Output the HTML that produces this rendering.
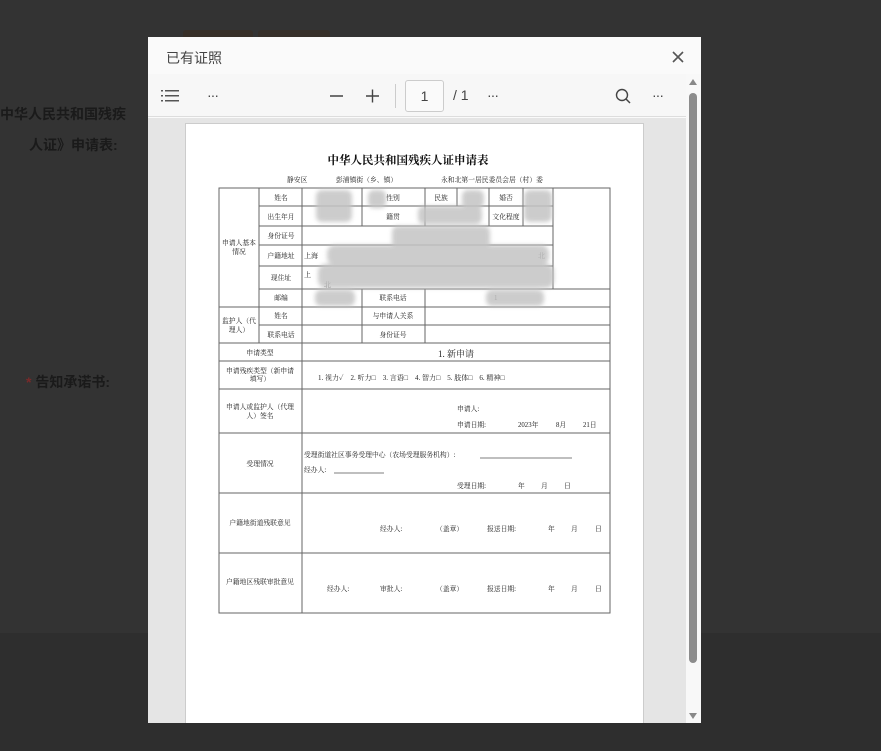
<!DOCTYPE html>
<html><head><meta charset="utf-8"><style>
*{margin:0;padding:0;box-sizing:border-box}
body{width:881px;height:751px;overflow:hidden;background:#333;position:relative;font-family:"Liberation Sans","Noto Sans CJK SC",sans-serif}
.abs{position:absolute}
</style></head><body>
<div class="abs" style="left:0;top:633px;width:881px;height:118px;background:#2e2e2e"></div>
<div class="abs" style="left:183px;top:30px;width:70px;height:8px;background:#372f28;border-radius:3px 3px 0 0"></div>
<div class="abs" style="left:258px;top:30px;width:72px;height:8px;background:#362f29;border-radius:3px 3px 0 0"></div>
<div class="abs" style="left:0;top:104px;font-size:14px;font-weight:bold;color:#1a1a1a">中华人民共和国残疾</div>
<div class="abs" style="left:29px;top:135px;font-size:14px;font-weight:bold;color:#1a1a1a">人证》申请表:</div>
<div class="abs" style="left:26px;top:372px;font-size:14px;font-weight:bold;color:#1a1a1a"><span style="color:#7a2a2a">*</span> 告知承诺书:</div>

<div class="abs" style="left:148px;top:37px;width:553px;height:686px;background:#fafafa"></div>
<div class="abs" style="left:166px;top:48px;font-size:14px;color:#444">已有证照</div>
<svg class="abs" style="left:671px;top:50px" width="14" height="14"><path d="M2 2L12 12M12 2L2 12" stroke="#555" stroke-width="1.6"/></svg>
<div class="abs" style="left:148px;top:74px;width:538px;height:43px;background:#f7f7f7;border-bottom:1px solid #ddd"></div>
<svg class="abs" style="left:160px;top:88px" width="22" height="16"><g fill="#555"><rect x="1" y="2" width="2" height="1.5"/><rect x="5" y="2" width="14" height="1.5"/><rect x="1" y="7" width="2" height="1.5"/><rect x="5" y="7" width="14" height="1.5"/><rect x="1" y="12" width="2" height="1.5"/><rect x="5" y="12" width="14" height="1.5"/></g></svg>
<div class="abs" style="left:207px;top:87px;font-size:14px;color:#444;letter-spacing:-1px">···</div>
<svg class="abs" style="left:328px;top:88px" width="60" height="16"><path d="M2 8H15M38 8H51M44.5 1.5V14.5" stroke="#444" stroke-width="1.4"/></svg>
<div class="abs" style="left:395px;top:84px;width:1px;height:24px;background:#ccc"></div>
<div class="abs" style="left:405px;top:80px;width:39px;height:32px;border:1px solid #ccc;border-radius:3px;background:#fafafa;font-size:14px;color:#444;text-align:center;line-height:30px">1</div>
<div class="abs" style="left:453px;top:87px;font-size:14px;color:#444">/ 1</div>
<div class="abs" style="left:487px;top:87px;font-size:14px;color:#444;letter-spacing:-1px">···</div>
<svg class="abs" style="left:614px;top:87px" width="18" height="18"><circle cx="8" cy="8" r="5.5" stroke="#444" stroke-width="1.4" fill="none"/><path d="M12 12L16 16" stroke="#444" stroke-width="1.5"/></svg>
<div class="abs" style="left:652px;top:87px;font-size:14px;color:#444;letter-spacing:-1px">···</div>
<div class="abs" style="left:148px;top:118px;width:538px;height:605px;background:#e5e5e5"></div>
<div class="abs" style="left:185px;top:123px;width:459px;height:600px;background:#fff;border:1px solid #ccc;border-bottom:none"></div>
<div class="abs" style="left:686px;top:74px;width:15px;height:649px;background:#f8f8f8"></div>
<svg class="abs" style="left:686px;top:76px" width="14" height="648"><path d="M3 9L7 3L11 9Z" fill="#888"/><path d="M3 637L7 643L11 637Z" fill="#888"/><rect x="3" y="17" width="8" height="570" rx="4" fill="#8c8c8c"/></svg>

<svg class="abs" style="left:0;top:0" width="881" height="751" font-family="Liberation Serif,Noto Serif CJK SC,serif" fill="#222">
<text x="408" y="164" font-size="11.5" text-anchor="middle" fill="#111" font-weight="bold">中华人民共和国残疾人证申请表</text>
<g font-size="6.8">
<text x="287" y="182">静安区</text><text x="336" y="182">彭浦镇街（乡、镇）</text><text x="441" y="182">永和北第一居民委员会居（村）委</text>
</g>
<g stroke="#666" stroke-width="1" fill="none">
<rect x="219" y="188" width="391" height="425"/>
<path d="M219 307H610M219 343H610M219 361H610M219 389H610M219 433H610M219 493H610M219 553H610"/>
<path d="M259 206H553M259 226H553M259 245H553M259 266H553M259 289H610M259 325H610"/>
<path d="M259 188V343M302 188V613M553 188V289"/>
<path d="M362 188V226M425 188V226M457 188V206M489 188V226M523 188V226"/>
<path d="M362 289V343M425 289V343"/>
</g>
<g font-size="6.8" text-anchor="middle">
<text x="281" y="200">姓名</text><text x="393" y="200">性别</text><text x="441" y="200">民族</text><text x="506" y="200">婚否</text>
<text x="281" y="219">出生年月</text><text x="393" y="219">籍贯</text><text x="506" y="219">文化程度</text>
<text x="281" y="238">身份证号</text><text x="281" y="258">户籍地址</text><text x="281" y="280">现住址</text>
<text x="239" y="245">申请人基本</text><text x="239" y="254">情况</text>
<text x="281" y="300">邮编</text><text x="393" y="300">联系电话</text>
<text x="281" y="318">姓名</text><text x="393" y="318">与申请人关系</text>
<text x="281" y="337">联系电话</text><text x="393" y="337">身份证号</text>
<text x="239" y="323">监护人（代</text><text x="239" y="332">理人）</text>
<text x="260" y="355">申请类型</text>
<text x="260" y="373">申请残疾类型（新申请</text><text x="260" y="381">填写）</text>
<text x="260" y="409">申请人或监护人（代理</text><text x="260" y="418">人）签名</text>
<text x="260" y="466">受理情况</text>
<text x="260" y="525">户籍地街道残联意见</text>
<text x="260" y="584">户籍地区残联审批意见</text>
</g>
<text x="456" y="357" font-size="9" text-anchor="middle">1. 新申请</text>
<text x="318" y="380" font-size="7">1. 视力✓　2. 听力□　3. 言语□　4. 智力□　5. 肢体□　6. 精神□</text>
<g font-size="6.8">
<text x="457" y="411">申请人:</text><text x="457" y="427">申请日期:</text><text x="518" y="427">2023年</text><text x="556" y="427">8月</text><text x="583" y="427">21日</text>
<text x="304" y="457">受理街道社区事务受理中心（农场受理服务机构）:</text>
<text x="304" y="472">经办人:</text>
<text x="457" y="488">受理日期:</text><text x="518" y="488">年</text><text x="541" y="488">月</text><text x="564" y="488">日</text>
<text x="380" y="531">经办人:</text><text x="436" y="531">（盖章）</text><text x="487" y="531">报送日期:</text><text x="548" y="531">年</text><text x="571" y="531">月</text><text x="595" y="531">日</text>
<text x="327" y="591">经办人:</text><text x="380" y="591">审批人:</text><text x="436" y="591">（盖章）</text><text x="487" y="591">报送日期:</text><text x="548" y="591">年</text><text x="571" y="591">月</text><text x="595" y="591">日</text>
</g>
<path d="M480 458H572M334 473H384" stroke="#555" stroke-width="0.7"/>
<text x="304" y="258" font-size="7">上海</text><text x="304" y="277" font-size="7">上</text><text x="324" y="287" font-size="7">北</text><text x="538" y="258" font-size="7">北</text>
<text x="494" y="300" font-size="7">1</text>
<g fill="#c4c4c4" opacity="0.85" style="filter:blur(2px)">
<rect x="316" y="190" width="36" height="32" rx="6"/>
<rect x="368" y="190" width="18" height="18" rx="6"/>
<rect x="462" y="190" width="22" height="18" rx="6"/>
<rect x="524" y="190" width="28" height="32" rx="6"/>
<rect x="418" y="206" width="64" height="18" rx="6"/>
<rect x="392" y="226" width="98" height="22" rx="6"/>
<rect x="327" y="245" width="222" height="20" rx="8"/>
<rect x="318" y="264" width="236" height="24" rx="8"/>
<rect x="315" y="290" width="40" height="16" rx="6"/>
<rect x="486" y="290" width="58" height="16" rx="6"/>
</g>
</svg>
</body></html>
